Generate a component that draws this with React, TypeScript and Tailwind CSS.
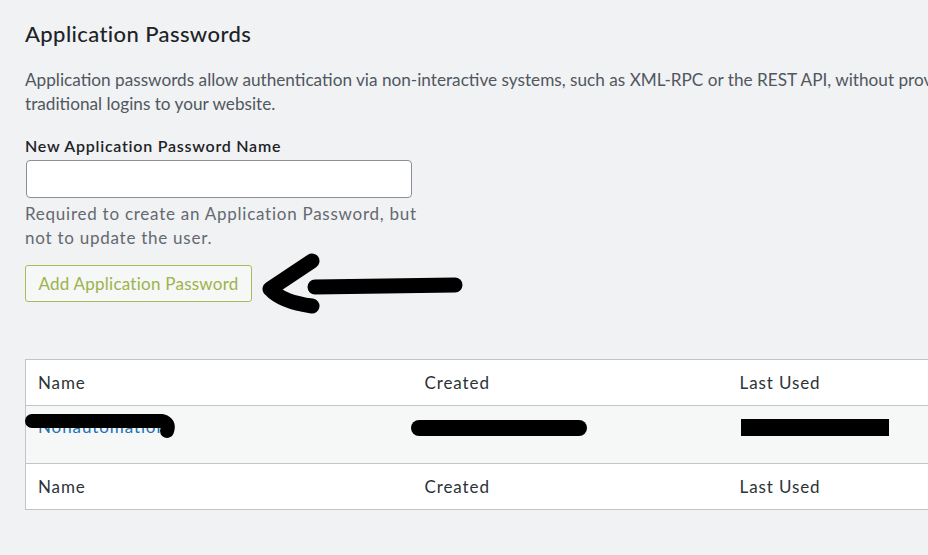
const font = { fontFamily: "Lato, 'Noto Sans', sans-serif" };

const Mark = ({ d, w, h, sw = 14 }: { d: string; w: number; h: number; sw?: number }) => (
  <svg width={w} height={h} viewBox={`0 0 ${w} ${h}`} className="pointer-events-none">
    <path d={d} fill="none" stroke="#000" strokeWidth={sw} strokeLinecap="round" strokeLinejoin="round" />
  </svg>
);

export default function App() {
  return (
    <div className="h-[555px] w-[928px] overflow-hidden bg-[#f1f2f4] text-[#2c3338]" style={font}>
      <div className="pl-[25px] pt-[20px]">
        <h2 className="text-[22px] leading-[28px] font-medium tracking-[0.4px] text-[#1d2327]">
          Application Passwords
        </h2>

        <p className="mt-[20px] w-[1200px] text-[17.2px] leading-[24px] text-[#50575e]">
          <span className="block whitespace-nowrap">
            Application passwords allow authentication via non-interactive systems, such as XML-RPC or the REST API, without providing your actual password. They cannot be used for
          </span>
          <span className="block">traditional logins to your website.</span>
        </p>

        <div className="mt-[18px]">
          <label className="block text-[16px] leading-[24px] font-semibold tracking-[0.75px] text-[#1d2327]">
            New Application Password Name
          </label>
          <input
            type="text"
            className="mt-[2px] ml-px block h-[38px] w-[386px] rounded-[4px] border border-[#8c8f94] bg-white"
          />
          <p className="mt-[4px] w-[400px] text-[17px] leading-[24px] tracking-[0.75px] text-[#646970]">
            Required to create an Application Password, but not to update the user.
          </p>
        </div>

        <div className="relative mt-[15px] flex items-center">
          <button className="h-[37px] w-[227px] rounded-[3px] border border-[#a8bd5a] bg-[#f6f7f7] text-[17px] tracking-[0.25px] text-[#9db34b]">
            Add Application Password
          </button>
          {/* hand-drawn arrow pointing at the button */}
          <div className="absolute left-[235px] top-[-13px]">
            <Mark w={210} h={66} sw={15} d="M52 9 L10 37 Q22 50 52 54 M55 35 L195 33" />
          </div>
        </div>

        <div className="mt-[57px] w-[1100px]">
          <table className="w-full border-collapse border border-[#c3c4c7] bg-white text-left text-[17px] tracking-[0.9px] text-[#2c3338]">
            <thead>
              <tr className="h-[46px] border-b border-[#c3c4c7]">
                <th className="w-[387px] pl-[12px] font-normal">Name</th>
                <th className="w-[315px] pl-[12px] font-normal">Created</th>
                <th className="pl-[12px] font-normal">Last Used</th>
              </tr>
            </thead>
            <tbody>
              <tr className="h-[58px] bg-[#f6f7f7] align-top">
                <td className="relative pl-[12px] pt-[9px] leading-[24px]">
                  <span className="text-[#2271b1]">Nonautomation</span>
                  <div className="absolute left-[-2px] top-[5px]">
                    <Mark w={160} h={30} sw={14} d="M8 10 L138 10 Q146 12 143 20" />
                  </div>
                </td>
                <td className="relative pl-[12px] pt-[8px]">
                  <div className="absolute left-[-4px] top-[6px]">
                    <Mark w={190} h={30} sw={16} d="M10 16 L170 16" />
                  </div>
                </td>
                <td className="relative pl-[12px] pt-[8px]">
                  <div className="absolute left-[13px] top-[13px] h-[17px] w-[148px] bg-black" />
                </td>
              </tr>
            </tbody>
            <tfoot>
              <tr className="h-[46px] border-t border-[#c3c4c7]">
                <th className="pl-[12px] font-normal">Name</th>
                <th className="pl-[12px] font-normal">Created</th>
                <th className="pl-[12px] font-normal">Last Used</th>
              </tr>
            </tfoot>
          </table>
        </div>
      </div>
    </div>
  );
}
